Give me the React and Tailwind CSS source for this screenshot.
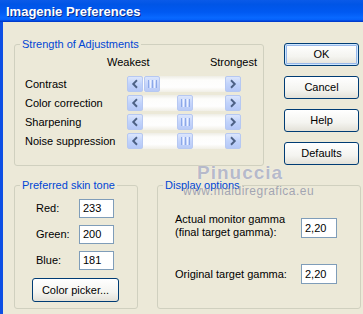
import React from "react";

const FONT = { fontFamily: '"Liberation Sans", Arial, sans-serif' };

function Chevron({ dir }) {
  return (
    <svg width="16" height="16" viewBox="0 0 16 16" className="block">
      {dir === "left" ? (
        <path d="M9.5 4.5 L6 8 L9.5 11.5" fill="none" stroke="#4D6185" strokeWidth="2.2" strokeLinecap="square" />
      ) : (
        <path d="M6.5 4.5 L10 8 L6.5 11.5" fill="none" stroke="#4D6185" strokeWidth="2.2" strokeLinecap="square" />
      )}
    </svg>
  );
}

function ArrowBtn({ dir }) {
  return (
    <div className="w-[16px] h-[16px] rounded-[2px] border border-[#B6C8F2] bg-[linear-gradient(to_bottom,#DCE6FC,#C1D3FB_50%,#B5C8F7)] flex items-center justify-center shrink-0">
      <Chevron dir={dir} />
    </div>
  );
}

function Thumb({ cls }) {
  return (
    <div className={"w-[16px] h-[16px] rounded-[2px] border border-[#B6C8F2] bg-[linear-gradient(to_bottom,#DCE6FC,#C6D5FB_50%,#B9CBF7)] flex items-center justify-center gap-[1px] shrink-0 " + cls}>
      <div className="w-[1px] h-[8px] bg-[#8CA8E8]" />
      <div className="w-[1px] h-[8px] bg-[#EEF3FF]" />
      <div className="w-[1px] h-[8px] bg-[#8CA8E8]" />
      <div className="w-[1px] h-[8px] bg-[#EEF3FF]" />
      <div className="w-[1px] h-[8px] bg-[#8CA8E8]" />
    </div>
  );
}

function Slider({ thumbCls }) {
  return (
    <div className="flex w-[114px] h-[16px]">
      <ArrowBtn dir="left" />
      <div className="flex-1 h-[16px] flex items-center bg-[linear-gradient(to_bottom,#EEEDE5,#FDFDFB_25%,#FEFEFE_70%,#F1EFE6)]">
        <Thumb cls={thumbCls} />
      </div>
      <ArrowBtn dir="right" />
    </div>
  );
}

function XPButton({ children, def, cls }) {
  return (
    <div
      className={
        "rounded-[3px] border border-[#003C74] bg-[linear-gradient(to_bottom,#FFFFFF,#F4F4F0_60%,#E3E1D8)] flex items-center justify-center text-[11px] text-black " +
        (def ? "shadow-[inset_0_0_0_1px_#CEE7FF,inset_0_0_0_2px_#98B8EA] " : "") +
        cls
      }
    >
      {children}
    </div>
  );
}

function Group({ label, cls, children }) {
  return (
    <div className={"relative border border-[#D0D0BF] rounded-[3px] " + cls}>
      <span className="absolute -top-[7px] left-[5px] px-[2px] bg-[#ECE9D8] text-[#0046D5] text-[11px] leading-[13px] whitespace-nowrap">
        {label}
      </span>
      {children}
    </div>
  );
}

function Field({ value, cls }) {
  return (
    <div className={"border border-[#7F9DB9] bg-white text-[11px] text-black flex items-center pl-[3px] " + cls}>
      {value}
    </div>
  );
}

const rows = [
  { label: "Contrast", thumb: "ml-[1px]" },
  { label: "Color correction", thumb: "ml-[34px]" },
  { label: "Sharpening", thumb: "ml-[34px]" },
  { label: "Noise suppression", thumb: "ml-[34px]" },
];

export default function App() {
  return (
    <div style={FONT} className="w-[363px] h-[314px] overflow-hidden bg-[#ECE9D8] flex flex-col">
      <div className="h-[22px] shrink-0 bg-[linear-gradient(to_bottom,#0A5AE8_0%,#0055E6_20%,#0059F2_55%,#0868FF_80%,#0561FB_90%,#003DD0_96%,#0038C8_100%)] flex items-center pl-[6px]">
        <span className="text-white font-bold text-[13px] leading-none [text-shadow:1px_1px_0_#0A2A8A]">
          Imagenie Preferences
        </span>
      </div>
      <div className="relative flex-1 flex flex-col border-l-[3px] border-[#0D4FE4] text-[11px] text-black">
        <div className="flex items-start">
          <Group label="Strength of Adjustments" cls="ml-[11px] mt-[22px] w-[250px] h-[122px]">
            <div className="flex justify-between pl-[92px] pr-[6px] mt-[11px] h-[13px] leading-[13px]">
              <span>Weakest</span>
              <span>Strongest</span>
            </div>
            <div className="flex flex-col gap-[3px] mt-[7px]">
              {rows.map((r) => (
                <div key={r.label} className="flex items-center h-[16px]">
                  <span className="pl-[10px] w-[112px] leading-[13px]">{r.label}</span>
                  <Slider thumbCls={r.thumb} />
                </div>
              ))}
            </div>
          </Group>
          <div className="ml-[20px] mt-[21px] flex flex-col gap-[10px] w-[75px]">
            <XPButton def cls="h-[23px]">OK</XPButton>
            <XPButton cls="h-[23px]">Cancel</XPButton>
            <XPButton cls="h-[23px]">Help</XPButton>
            <XPButton cls="h-[23px]">Defaults</XPButton>
          </div>
        </div>
        <div className="flex items-start mt-[19px]">
          <Group label="Preferred skin tone" cls="ml-[11px] w-[124px] h-[124px]">
            <div className="flex flex-col gap-[7px] mt-[13px]">
              {[
                ["Red:", "233"],
                ["Green:", "200"],
                ["Blue:", "181"],
              ].map(([l, v]) => (
                <div key={l} className="flex items-center pl-[21px]">
                  <span className="w-[43px]">{l}</span>
                  <Field value={v} cls="w-[35px] h-[19px]" />
                </div>
              ))}
            </div>
            <XPButton cls="ml-[17px] mt-[8px] w-[87px] h-[24px]">Color picker...</XPButton>
          </Group>
          <Group label="Display options" cls="ml-[19px] w-[204px] h-[124px]">
            <div className="flex items-start pl-[17px] mt-[27px]">
              <div className="w-[126px] leading-[13px]">
                Actual monitor gamma
                <br />
                (final target gamma):
              </div>
              <Field value="2,20" cls="mt-[5px] w-[36px] h-[20px]" />
            </div>
            <div className="flex items-center pl-[17px] mt-[25px]">
              <div className="w-[126px] leading-[13px]">Original target gamma:</div>
              <Field value="2,20" cls="w-[36px] h-[20px]" />
            </div>
          </Group>
        </div>
        <div className="absolute left-[194px] top-[141px] text-[19px] leading-[20px] font-bold text-[#A3A7BC]/80 tracking-[1px] [text-shadow:0_0_1px_#fff] pointer-events-none">
          Pinuccia
        </div>
        <div className="absolute left-[180px] top-[162px] text-[12px] leading-[14px] text-[#8E92A8]/80 tracking-[0.5px] pointer-events-none">
          www.maidiregrafica.eu
        </div>
      </div>
    </div>
  );
}
